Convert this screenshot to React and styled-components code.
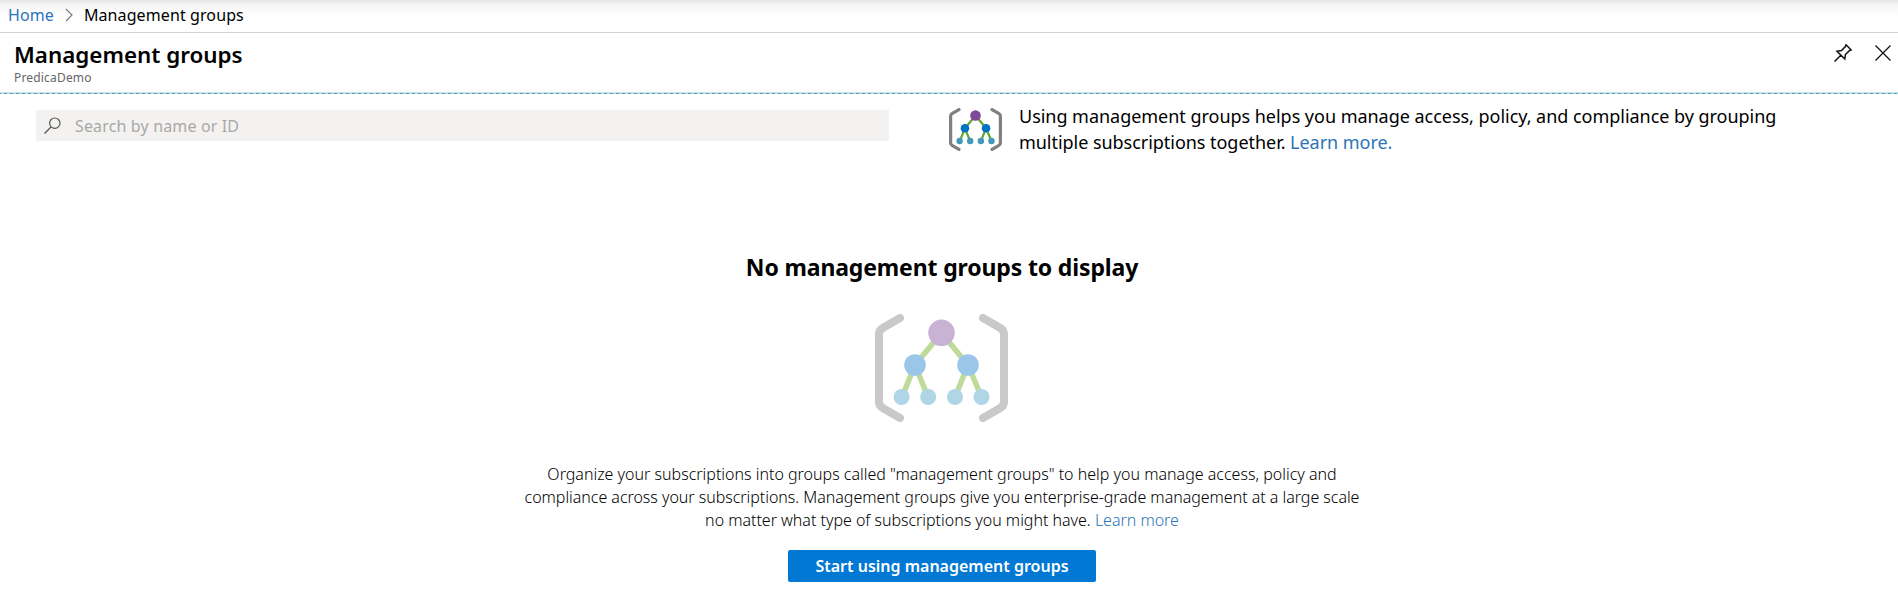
import React from "react";
import styled, { createGlobalStyle } from "styled-components";

const GlobalStyle = createGlobalStyle`
  * { box-sizing: border-box; }
  body {
    margin: 0;
    background: #fff;
    color: #000;
    font-family: "Noto Sans", "Open Sans", sans-serif;
    overflow: hidden;
  }
`;

const Page = styled.div`
  display: flex;
  flex-direction: column;
  height: 596px;
`;

const Breadcrumb = styled.nav`
  display: flex;
  align-items: center;
  height: 33px;
  padding: 0 8px 3px 8px;
  border-bottom: 1px solid #d2d2d2;
  background: linear-gradient(#e6e6e6 0, #f4f4f4 5px, #fbfbfb 11px, #fff 18px);
  font-size: 16px;
  letter-spacing: 0.1px;
`;

const Link = styled.a`
  color: #2b74b8;
  text-decoration: none;
`;

const Chevron = styled.svg`
  width: 8px;
  height: 14px;
  margin: 0 11px 0 11px;
`;

const Header = styled.header`
  display: flex;
  justify-content: space-between;
  height: 59px;
  padding: 6px 7px 0 14px;
`;

const Title = styled.h1`
  margin: 0;
  font-size: 22.4px;
  font-weight: 600;
  line-height: 32px;
`;

const Subtitle = styled.div`
  margin-top: -2px;
  font-size: 12px;
  line-height: 17px;
  letter-spacing: 0.18px;
  color: #666;
`;

const Actions = styled.div`
  display: flex;
  gap: 23px;
  padding-top: 5px;
`;

const ActionIcon = styled.svg`
  width: ${(p) => p.$width}px;
  height: 18px;
`;

const DashedRule = styled.div`
  height: 2px;
  background:
    repeating-linear-gradient(90deg, #b4dce2 0 1px, #5aa3ae 1px 4px, #b4dce2 4px 6px) -3px 1px / 1902px 1px no-repeat,
    #c4e4ea;
`;

const TopRow = styled.div`
  display: flex;
  align-items: flex-start;
  height: 57px;
  padding: 16px 0 0 36px;
`;

const SearchBox = styled.div`
  display: flex;
  align-items: center;
  width: 853px;
  height: 31px;
  padding-left: 8px;
  background: #f3f2f1;
  color: #a9a8a7;
  font-size: 16px;
  letter-spacing: 0.15px;
`;

const SearchIcon = styled.svg`
  width: 17px;
  height: 17px;
  margin-right: 14px;
`;

const Info = styled.div`
  display: flex;
  margin-left: 60px;
`;

const GroupIcon = styled.svg`
  width: ${(p) => p.$width}px;
  height: ${(p) => p.$height}px;
  margin-top: ${(p) => p.$top}px;
`;

const InfoText = styled.p`
  margin: -7px 0 0 17px;
  font-size: 18px;
  line-height: 26px;
  white-space: nowrap;
`;

const EmptyState = styled.section`
  display: flex;
  flex-direction: column;
  align-items: center;
  width: 1884px;
  padding-top: 100px;
`;

const EmptyTitle = styled.h2`
  margin: 0;
  font-size: 23px;
  font-weight: 700;
  line-height: 32px;
  letter-spacing: -0.14px;
`;

const EmptyArt = styled.div`
  display: flex;
  padding-right: 1px;
`;

const Description = styled.p`
  margin: 41px 0 0;
  font-size: 16px;
  font-weight: 300;
  line-height: 23px;
  text-align: center;
  white-space: nowrap;
`;

const Line = styled.span`
  display: block;
  letter-spacing: ${(p) => p.$spacing || 0}px;
`;

const PrimaryButton = styled.button`
  width: 308px;
  height: 32px;
  margin-top: 18px;
  padding: 0;
  border: 0;
  border-radius: 2px;
  background: #0078d4;
  color: #fff;
  font: 600 16px/32px "Noto Sans", "Open Sans", sans-serif;
`;

const SOLID = { bracket: "#7f7f7f", line: "#5ea52f", root: "#804998", mid: "#0072c6", leaf: "#4298b8" };
const MUTED = { bracket: "#c9c9c9", line: "#bedb9c", root: "#c9b3d5", mid: "#99c6e9", leaf: "#b0d5e6" };

function ManagementGroupsIcon({ colors, width, height, top }) {
  return (
    <GroupIcon $width={width} $height={height} $top={top} viewBox="0 0 133 108">
      <g fill="none" stroke={colors.bracket} strokeWidth="8" strokeLinecap="round" strokeLinejoin="round">
        <path d="M25 4 8.5 13.5Q4 16 4 20V88Q4 92 8.5 94.5L25 104" />
        <path d="M108 4 124.5 13.5Q129 16 129 20V88Q129 92 124.5 94.5L108 104" />
      </g>
      <path d="M66.5 19 40 51 27 83M40 51 53 83M66.5 19 93 51 80 83M93 51 106.5 83" fill="none" stroke={colors.line} strokeWidth="5.5" />
      <circle cx="66.5" cy="18.8" r="13.3" fill={colors.root} />
      <circle cx="40" cy="51" r="10.8" fill={colors.mid} />
      <circle cx="93" cy="51" r="10.8" fill={colors.mid} />
      {[26.6, 53.2, 80, 106.5].map((x) => (
        <circle key={x} cx={x} cy="83" r="8" fill={colors.leaf} />
      ))}
    </GroupIcon>
  );
}

export default function App() {
  return (
    <Page>
      <GlobalStyle />
      <Breadcrumb>
        <Link>Home</Link>
        <Chevron viewBox="0 0 8 14" fill="none" stroke="#777" strokeWidth="1.1">
          <path d="M1 1 7 7 1 13" />
        </Chevron>
        <span>Management groups</span>
      </Breadcrumb>
      <Header>
        <div>
          <Title>Management groups</Title>
          <Subtitle>PredicaDemo</Subtitle>
        </div>
        <Actions>
          <ActionIcon $width={18} viewBox="0 0 18 18" fill="none" stroke="#111" strokeWidth="1.5">
            <path d="M12 .8 17.2 6 15.4 6.6 11.4 10.5 10.8 15 3 7.2 7.5 6.6 11.4 2.6ZM6.8 11.2.5 17.5" />
          </ActionIcon>
          <ActionIcon $width={16} viewBox="0 0 16 18" fill="none" stroke="#111" strokeWidth="1.3">
            <path d="M.5 1.5 15.5 16.5M15.5 1.5.5 16.5" />
          </ActionIcon>
        </Actions>
      </Header>
      <DashedRule />
      <TopRow>
        <SearchBox>
          <SearchIcon viewBox="0 0 17 17" fill="none" stroke="#555" strokeWidth="1.2">
            <circle cx="10.8" cy="6.2" r="5.2" />
            <path d="M7 10 .5 16.5" />
          </SearchIcon>
          Search by name or ID
        </SearchBox>
        <Info>
          <ManagementGroupsIcon colors={SOLID} width={53} height={43} top={-2} />
          <InfoText>
            <Line $spacing={-0.03}>
              Using management groups helps you manage access, policy, and compliance by grouping
            </Line>
            <Line $spacing={-0.04}>
              multiple subscriptions together. <Link>Learn more.</Link>
            </Line>
          </InfoText>
        </Info>
      </TopRow>
      <EmptyState>
        <EmptyTitle>No management groups to display</EmptyTitle>
        <EmptyArt>
          <ManagementGroupsIcon colors={MUTED} width={133} height={108} top={31} />
        </EmptyArt>
        <Description>
          <Line>
            Organize your subscriptions into groups called "management groups" to help you manage access, policy and
          </Line>
          <Line $spacing={-0.03}>
            compliance across your subscriptions. Management groups give you enterprise-grade management at a large scale
          </Line>
          <Line $spacing={-0.02}>
            no matter what type of subscriptions you might have. <Link>Learn more</Link>
          </Line>
        </Description>
        <PrimaryButton>Start using management groups</PrimaryButton>
      </EmptyState>
    </Page>
  );
}
